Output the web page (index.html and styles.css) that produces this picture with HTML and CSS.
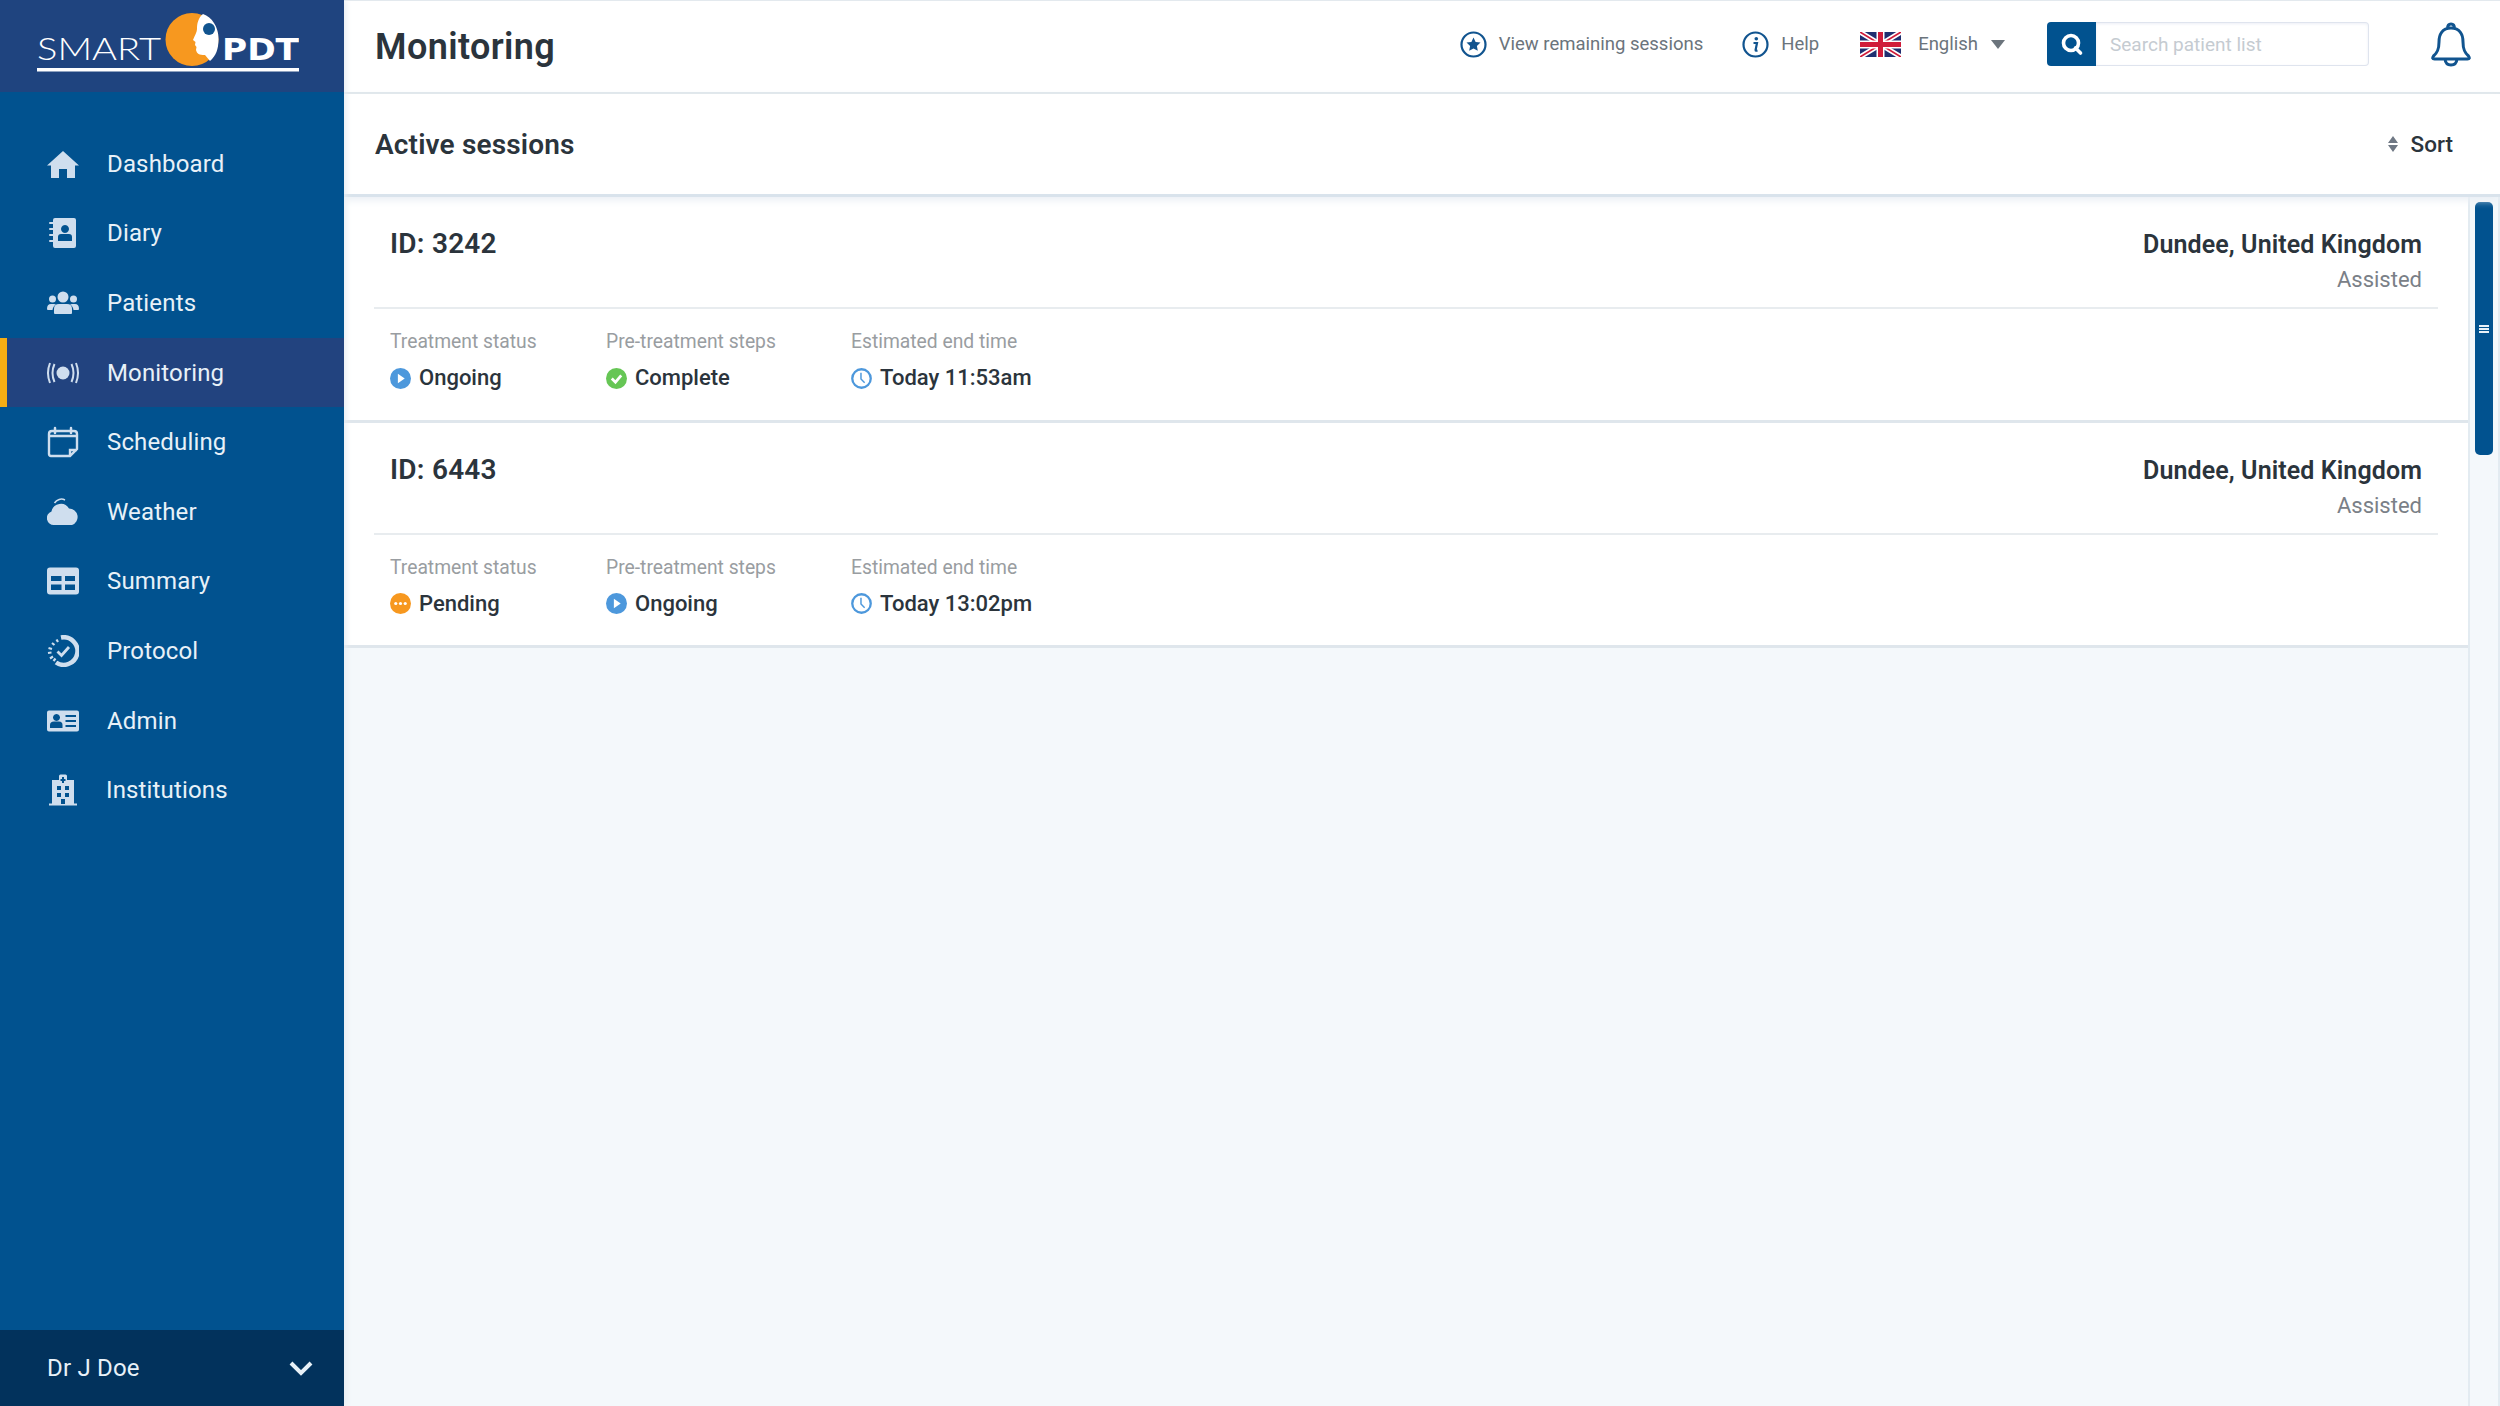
FILE: index.html
```html
<!DOCTYPE html>
<html lang="en">
  <head>
    <meta charset="UTF-8" />
    <title>Monitoring</title>
    <link rel="stylesheet" href="styles.css">
  </head>
  <body>
    <div class="app">
      <aside class="sidebar">
        <div class="brand">
          <svg class="logo" width="262" height="64" viewBox="0 0 262 64">
            <text class="logo-smart" x="0" y="51" textLength="124" lengthAdjust="spacingAndGlyphs">SMART</text>
            <circle cx="155" cy="30.500" r="26.500" fill="#f7981f"/>
            <path d="M166 5 C161 9 160 15 160 20 C160 23 158 26 156 31 L158.500 33 L158 36 L159.500 38 L159 41 C160 45 162 46 168 46 L173 52 C179 47 181.500 40 181.500 30 C181.500 18 175 8 166 5 Z" fill="#fff"/>
            <circle cx="172" cy="20" r="6" fill="#11548f"/>
            <text class="logo-pdt" x="185" y="51" textLength="77" lengthAdjust="spacingAndGlyphs">PDT</text>
            <rect x="0" y="59" width="262" height="3.500" fill="#fff"/>
          </svg>
        </div>
        <nav class="nav">
          <a class="nav-item">
            <svg class="nav-icon" viewBox="0 0 32 32"><path d="M16 3 L32 17.500 L28 17.500 L28 30 L20 30 L20 21 L12 21 L12 30 L4 30 L4 17.500 L0 17.500 Z"/></svg>
            Dashboard
          </a>
          <a class="nav-item">
            <svg class="nav-icon" viewBox="0 0 32 32"><path fill-rule="evenodd" d="M8 1 H27 Q29 1 29 3 V29 Q29 31 27 31 H8 Q6 31 6 29 V3 Q6 1 8 1 Z M18 8 A4 4 0 1 0 18.010 8 Z M11 24 H25 V20 Q25 17 22 17 H14 Q11 17 11 20 Z"/><path d="M3 6 H9 M3 12 H9 M3 18 H9 M3 24 H9" stroke="#cfdeee" stroke-width="2" stroke-linecap="round"/></svg>
            Diary
          </a>
          <a class="nav-item">
            <svg class="nav-icon" viewBox="0 0 32 32"><circle cx="16" cy="10" r="5.500"/><circle cx="5.500" cy="12" r="3.500"/><circle cx="26.500" cy="12" r="3.500"/><path d="M7 26 V22 Q7 17 12 17 H20 Q25 17 25 22 V26 Q25 27 24 27 H8 Q7 27 7 26 Z"/><path d="M0 22 Q0 17 4 17 H7 Q8 17 9 17.500 Q6 19 5.500 23 H1 Q0 23 0 22 Z M32 22 Q32 17 28 17 H25 Q24 17 23 17.500 Q26 19 26.500 23 H31 Q32 23 32 22 Z"/></svg>
            Patients
          </a>
          <a class="nav-item active">
            <svg class="nav-icon" viewBox="0 0 32 32"><circle cx="16" cy="16" r="6.500"/><path d="M7.500 7 Q3.500 16 7.500 25 M24.500 7 Q28.500 16 24.500 25 M3 6 Q-1 16 3 26 M29 6 Q33 16 29 26" fill="none" stroke="#cfdeee" stroke-width="2"/></svg>
            Monitoring
          </a>
          <a class="nav-item">
            <svg class="nav-icon" viewBox="0 0 32 32"><path d="M5 5 H27 Q30 5 30 8 V23 L23 30 H4 Q2 30 2 28 V8 Q2 5 5 5 Z M2 10 H30 M23 30 V24 H30" fill="none" stroke="#cfdeee" stroke-width="2.400"/><path d="M8 2 V7 M24 2 V7" stroke="#cfdeee" stroke-width="2.500" stroke-linecap="round"/></svg>
            Scheduling
          </a>
          <a class="nav-item">
            <svg class="nav-icon" viewBox="0 0 32 32"><path d="M7 29 A7 7 0 0 1 4.500 15.400 A9.500 9.500 0 0 1 22 12.500 A8.500 8.500 0 0 1 25 29 Z"/><path d="M7.500 7 A8 8 0 0 1 18 4" fill="none" stroke="#cfdeee" stroke-width="1.500"/></svg>
            Weather
          </a>
          <a class="nav-item">
            <svg class="nav-icon" viewBox="0 0 32 32"><path fill-rule="evenodd" d="M3 2.500 H29 Q32 2.500 32 5.500 V26.500 Q32 29.500 29 29.500 H3 Q0 29.500 0 26.500 V5.500 Q0 2.500 3 2.500 Z M4 11 V16 H14.500 V11 Z M18 11 V16 H28 V11 Z M4 19.500 V25 H14.500 V19.500 Z M18 19.500 V25 H28 V19.500 Z"/></svg>
            Summary
          </a>
          <a class="nav-item">
            <svg class="nav-icon" viewBox="0 0 32 32"><path d="M14 2.500 A13.800 13.800 0 1 1 9 27.500" fill="none" stroke="#cfdeee" stroke-width="4.500"/><path d="M9.500 4.500 L11 7 M5 8 L7.500 10 M1.500 13 L5 14 M1 18 L4.500 17.500 M3 23.500 L6 21.500 M6.500 26 L8.500 23.500" stroke="#cfdeee" stroke-width="2.200"/><path d="M10.500 16.500 L14.500 20.500 L22 12" fill="none" stroke="#cfdeee" stroke-width="2.800"/></svg>
            Protocol
          </a>
          <a class="nav-item">
            <svg class="nav-icon" viewBox="0 0 32 32"><path fill-rule="evenodd" d="M2 5.500 H30 Q32 5.500 32 7.500 V24.500 Q32 26.500 30 26.500 H2 Q0 26.500 0 24.500 V7.500 Q0 5.500 2 5.500 Z M9.500 9 A3.500 3.500 0 1 0 9.510 9 Z M3 23 H15.500 V20 Q15.500 16.500 12 16.500 H7 Q3 16.500 3 20 Z M18.500 10 V12 H29 V10 Z M18.500 15 V17 H29 V15 Z M18.500 20 V22 H29 V20 Z"/></svg>
            Admin
          </a>
          <a class="nav-item institutions">
            <svg class="nav-icon" viewBox="0 0 32 32"><path fill-rule="evenodd" d="M5 6 H12 V2 Q12 0.500 13.500 0.500 H18.500 Q20 0.500 20 2 V6 H27 V29.500 H30 V31.500 H2 V29.500 H5 Z M15 3 V5 H13.500 V7 H15 V9 H17 V7 H18.500 V5 H17 V3 Z M10 12 V16 H14 V12 Z M18 12 V16 H22 V12 Z M10 19 V23 H14 V19 Z M18 19 V23 H22 V19 Z M14 25 V30 H18 V25 Z"/></svg>
            Institutions
          </a>
        </nav>
        <div class="user">
          <span>Dr J Doe</span>
          <svg width="24" height="16" viewBox="0 0 24 16"><path d="M2 3 L12 13 L22 3" fill="none" stroke="#e8f1f8" stroke-width="4"/></svg>
        </div>
      </aside>

      <main class="main">
        <header class="topbar">
          <h1 class="page-title">Monitoring</h1>
          <div class="top-link sessions">
            <svg width="27" height="27" viewBox="0 0 27 27"><circle cx="13.500" cy="13.500" r="12" fill="none" stroke="#11548f" stroke-width="2.200"/><path d="M13.500 6.500 L15.600 11 L20.500 11.600 L16.900 14.900 L17.800 19.800 L13.500 17.400 L9.200 19.800 L10.100 14.900 L6.500 11.600 L11.400 11 Z" fill="#11548f"/></svg>
            View remaining sessions
          </div>
          <div class="top-link help">
            <svg width="27" height="27" viewBox="0 0 27 27"><circle cx="13.500" cy="13.500" r="12" fill="none" stroke="#11548f" stroke-width="2.200"/><circle cx="14.300" cy="7.800" r="1.800" fill="#11548f"/><path d="M11.500 12 H15 L13.600 19 Q13.500 20 15.500 19.500" fill="none" stroke="#11548f" stroke-width="2.200"/></svg>
            Help
          </div>
          <div class="top-link lang">
            <svg class="flag" width="41" height="25" viewBox="0 0 41 25">
              <rect width="41" height="25" fill="#1f2f70"/>
              <path d="M0 0 L41 25 M41 0 L0 25" stroke="#fff" stroke-width="5"/>
              <path d="M0 0 L41 25 M41 0 L0 25" stroke="#d01c3a" stroke-width="1.700"/>
              <path d="M20.500 0 V25 M0 12.500 H41" stroke="#fff" stroke-width="8"/>
              <path d="M20.500 0 V25 M0 12.500 H41" stroke="#d01c3a" stroke-width="5"/>
            </svg>
            <span class="lang-name">English</span>
            <span class="caret"></span>
          </div>
          <div class="search">
            <span class="search-btn">
              <svg width="24" height="24" viewBox="0 0 24 24"><circle cx="11" cy="11" r="7.500" fill="none" stroke="#fff" stroke-width="3.600"/><path d="M15.500 16 L20.500 21" stroke="#fff" stroke-width="3.600" stroke-linecap="round"/></svg>
            </span>
            <input class="search-input" type="text" placeholder="Search patient list" />
          </div>
          <svg class="bell" width="40" height="45" viewBox="0 0 40 45"><path d="M20 6 C11 6 8 13 8 20 C8 28 6 31 2.500 34 Q0.500 37 3.500 37 H36.500 Q39.500 37 37.500 34 C34 31 32 28 32 20 C32 13 29 6 20 6 Z M16.500 6.500 Q16.500 2 20 2 Q23.500 2 23.500 6.500 M14 37 Q14.500 43 20 43 Q25.500 43 26 37" fill="none" stroke="#11548f" stroke-width="3" stroke-linejoin="round"/></svg>
        </header>

        <div class="section-head">
          <h2 class="section-title">Active sessions</h2>
          <div class="sort">
            <svg width="10" height="16" viewBox="0 0 10 16"><path d="M5 0 L10 7 H0 Z M0 9 H10 L5 16 Z" fill="#6f7884"/></svg>
            Sort
          </div>
        </div>

        <div class="content">
          <div class="sessions-list">
            <article class="card">
              <div class="card-top">
                <div class="card-id">ID: 3242</div>
                <div class="card-place">
                  <div class="place-name">Dundee, United Kingdom</div>
                  <div class="place-type">Assisted</div>
                </div>
              </div>
              <div class="card-bottom">
                <div class="field status">
                  <div class="field-label">Treatment status</div>
                  <div class="field-value">
                    <svg class="state-icon" viewBox="0 0 20 20"><circle cx="10" cy="10" r="10" fill="#4d98dc"/><path d="M7.500 5.500 L14 10 L7.500 14.500 Z" fill="#fff"/></svg>
                    Ongoing
                  </div>
                </div>
                <div class="field steps">
                  <div class="field-label">Pre-treatment steps</div>
                  <div class="field-value">
                    <svg class="state-icon" viewBox="0 0 20 20"><circle cx="10" cy="10" r="10" fill="#66c655"/><path d="M5.500 10 L9 13.500 L14.500 7" fill="none" stroke="#fff" stroke-width="2.600"/></svg>
                    Complete
                  </div>
                </div>
                <div class="field">
                  <div class="field-label">Estimated end time</div>
                  <div class="field-value">
                    <svg class="state-icon" viewBox="0 0 20 20"><circle cx="10" cy="10" r="8.800" fill="none" stroke="#4d98dc" stroke-width="2.200"/><path d="M9.500 4.500 V10.500 L13 14" fill="none" stroke="#4d98dc" stroke-width="1.400"/></svg>
                    Today 11:53am
                  </div>
                </div>
              </div>
            </article>
            <article class="card">
              <div class="card-top">
                <div class="card-id">ID: 6443</div>
                <div class="card-place">
                  <div class="place-name">Dundee, United Kingdom</div>
                  <div class="place-type">Assisted</div>
                </div>
              </div>
              <div class="card-bottom">
                <div class="field status">
                  <div class="field-label">Treatment status</div>
                  <div class="field-value">
                    <svg class="state-icon" viewBox="0 0 20 20"><circle cx="10" cy="10" r="10" fill="#f7981f"/><circle cx="5.500" cy="10" r="1.500" fill="#fff"/><circle cx="10" cy="10" r="1.500" fill="#fff"/><circle cx="14.500" cy="10" r="1.500" fill="#fff"/></svg>
                    Pending
                  </div>
                </div>
                <div class="field steps">
                  <div class="field-label">Pre-treatment steps</div>
                  <div class="field-value">
                    <svg class="state-icon" viewBox="0 0 20 20"><circle cx="10" cy="10" r="10" fill="#4d98dc"/><path d="M7.500 5.500 L14 10 L7.500 14.500 Z" fill="#fff"/></svg>
                    Ongoing
                  </div>
                </div>
                <div class="field">
                  <div class="field-label">Estimated end time</div>
                  <div class="field-value">
                    <svg class="state-icon" viewBox="0 0 20 20"><circle cx="10" cy="10" r="8.800" fill="none" stroke="#4d98dc" stroke-width="2.200"/><path d="M9.500 4.500 V10.500 L13 14" fill="none" stroke="#4d98dc" stroke-width="1.400"/></svg>
                    Today 13:02pm
                  </div>
                </div>
              </div>
            </article>
          </div>
          <div class="scroll-track">
            <div class="scroll-thumb"><span class="grip"></span></div>
          </div>
        </div>
      </main>
    </div>
  </body>
</html>
```

FILE: styles.css
```css
* {
  margin: 0;
  padding: 0;
  box-sizing: border-box;
}

body {
  width: 2500px;
  height: 1406px;
  overflow: hidden;
  font-family: Roboto, "Liberation Sans", sans-serif;
  color: #2b343c;
  background: #f4f8fb;
}

.app {
  display: flex;
  height: 100%;
}

/* sidebar */
.sidebar {
  position: relative;
  z-index: 1;
  width: 344px;
  flex-shrink: 0;
  display: flex;
  flex-direction: column;
  background: #01528f;
  box-shadow: 2px 0 6px #e6ecf2;
}
.brand {
  height: 92px;
  padding: 9px 0 0 37px;
  background: #1f447f;
}
.logo {
  display: block;
}
.logo-smart {
  font-family: Lato, sans-serif;
  font-weight: 300;
  font-size: 32px;
  fill: #fff;
}
.logo-pdt {
  font-family: "DejaVu Sans", sans-serif;
  font-weight: 700;
  font-size: 31px;
  fill: #fff;
}
.nav {
  flex: 1;
  padding-top: 37px;
  display: flex;
  flex-direction: column;
}
.nav-item {
  height: 69.600px;
  padding-left: 47px;
  display: flex;
  align-items: center;
  gap: 28px;
  font-size: 24px;
  letter-spacing: 0.15px;
  color: #e8f1f8;
}
.nav-item.active {
  padding-left: 40px;
  border-left: 7px solid #f5ad14;
  background: #22437f;
}
.nav-item.institutions {
  gap: 27px;
}
.nav-icon {
  width: 32px;
  height: 32px;
  flex-shrink: 0;
  fill: #cfdeee;
}
.user {
  height: 76px;
  padding: 0 31px 0 47px;
  display: flex;
  align-items: center;
  justify-content: space-between;
  font-size: 24px;
  letter-spacing: 0.2px;
  color: #e8f1f8;
  background: #02325c;
}

/* main */
.main {
  flex: 1;
  min-width: 0;
  display: flex;
  flex-direction: column;
}
.topbar {
  height: 94px;
  padding: 0 29px 5px 31px;
  display: flex;
  align-items: center;
  background: #fff;
  border-top: 1px solid #e3e9ee;
  border-bottom: 2px solid #dfe6ea;
}
.page-title {
  flex: 1;
  margin-top: 5px;
  font-size: 36px;
  font-weight: 600;
  letter-spacing: 0.4px;
}
.top-link {
  display: flex;
  align-items: center;
  gap: 12px;
  font-size: 18.500px;
  color: #6b747c;
}
.sessions {
  margin-right: 39px;
}
.help {
  margin-right: 41px;
}
.lang {
  gap: 17px;
  margin-right: 42px;
}
.caret {
  width: 0;
  height: 0;
  border-left: 7px solid transparent;
  border-right: 7px solid transparent;
  border-top: 9px solid #6b747c;
  margin-left: -4px;
}
.search {
  width: 322px;
  height: 44px;
  display: flex;
  margin-right: 62px;
}
.search-btn {
  width: 49px;
  flex-shrink: 0;
  display: flex;
  align-items: center;
  justify-content: center;
  background: #01528f;
  border-radius: 4px 0 0 4px;
}
.search-input {
  flex: 1;
  min-width: 0;
  padding-left: 14px;
  border: 1px solid #dfe4ee;
  border-left: 0;
  border-radius: 0 4px 4px 0;
  box-shadow: inset 0 1px 3px #eceff6;
  font-family: inherit;
  font-size: 19px;
  outline: none;
}
.search-input::placeholder {
  color: #c5cbd1;
}
.section-head {
  position: relative;
  height: 103px;
  padding: 0 47px 0 31px;
  display: flex;
  align-items: center;
  justify-content: space-between;
  background: #fff;
  border-bottom: 3px solid #d9e3ec;
  box-shadow: 0 3px 8px #e9eef4;
}
.section-title {
  font-size: 28px;
  font-weight: 600;
  letter-spacing: 0.15px;
}
.sort {
  display: flex;
  align-items: center;
  gap: 13px;
  font-size: 22.500px;
  font-weight: 500;
}
.content {
  flex: 1;
  min-height: 0;
  display: flex;
}
.sessions-list {
  flex: 1;
  min-width: 0;
}
.card {
  height: 225.500px;
  padding: 0 30px 0 30px;
  background: #fff;
  border-bottom: 3px solid #dfe6ec;
}
.card-top {
  height: 112px;
  padding: 30px 16px 0 16px;
  display: flex;
  justify-content: space-between;
  border-bottom: 2px solid #e8ecef;
}
.card-id {
  font-size: 28px;
  font-weight: 600;
  letter-spacing: 0.25px;
  line-height: 34px;
}
.card-place {
  text-align: right;
}
.place-name {
  margin-top: 1px;
  font-size: 25px;
  font-weight: 600;
  letter-spacing: 0.1px;
  line-height: 34px;
}
.place-type {
  font-size: 22px;
  line-height: 36px;
  color: #7a8087;
}
.card-bottom {
  padding: 21px 16px 0 16px;
  display: flex;
}
.field {
  display: flex;
  flex-direction: column;
  gap: 11px;
}
.status {
  width: 216px;
}
.steps {
  width: 245px;
}
.field-label {
  font-size: 19.300px;
  line-height: 24px;
  color: #999da1;
}
.field-value {
  display: flex;
  align-items: center;
  gap: 8px;
  font-size: 22px;
  font-weight: 500;
  line-height: 26px;
}
.state-icon {
  width: 21px;
  height: 21px;
  flex-shrink: 0;
}
.scroll-track {
  width: 32px;
  flex-shrink: 0;
  padding: 5px 5px 0 5px;
  border-left: 2px solid #e3ebf1;
  border-right: 2px solid #e3ebf1;
}
.scroll-thumb {
  height: 253px;
  display: flex;
  align-items: center;
  justify-content: center;
  background: #01528f;
  border-radius: 5px;
}
.grip {
  width: 10px;
  height: 8px;
  border-top: 2px solid #e8f1f8;
  border-bottom: 2px solid #e8f1f8;
  background: linear-gradient(#01528f 0 1px, #e8f1f8 1px 3px, #01528f 3px);
}
```
